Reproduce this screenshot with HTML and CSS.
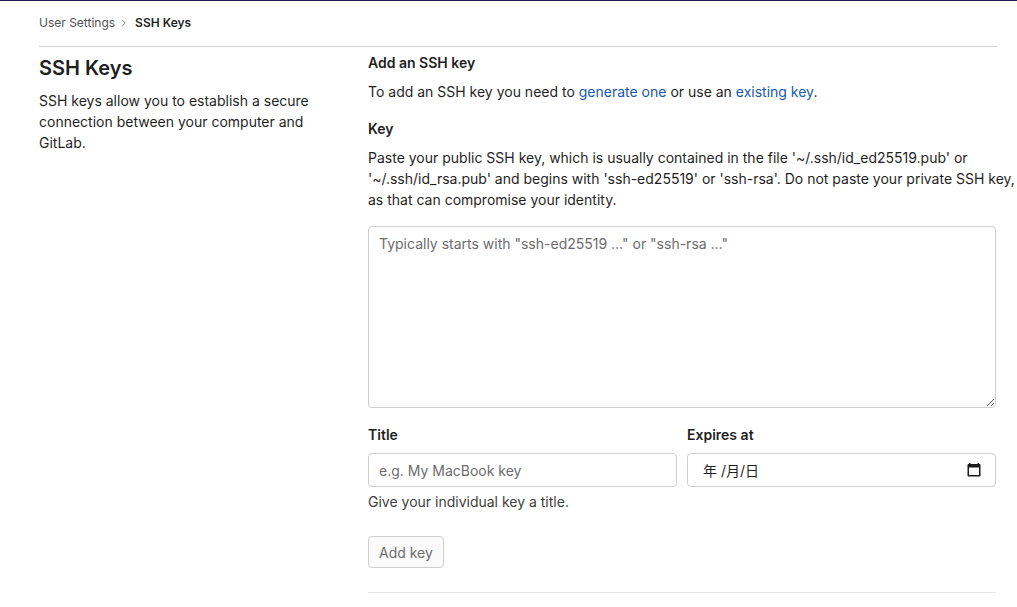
FILE: index.html
```html
<!DOCTYPE html>
<html lang="en">
<head>
<meta charset="utf-8">
<meta name="viewport" content="width=device-width, initial-scale=1">
<title>SSH Keys · User Settings · GitLab</title>
<link rel="stylesheet" href="styles.css">
</head>
<body>
<div class="page">
  <nav class="breadcrumbs" aria-label="Breadcrumbs">
    <a class="breadcrumb-link" href="#settings">User Settings</a>
    <svg class="breadcrumb-chevron" viewBox="0 0 8 8" aria-hidden="true"><path d="M2.5 1.2 5.2 4 2.5 6.8"/></svg>
    <a class="breadcrumb-current" href="#ssh" aria-current="page">SSH Keys</a>
  </nav>
  <main class="settings">
    <section class="intro">
      <h1 class="intro-title">SSH Keys</h1>
      <p class="text">SSH keys allow you to establish a secure connection between your computer and GitLab.</p>
    </section>
    <section class="content">
      <h2 class="heading">Add an SSH key</h2>
      <p class="text lead">To add an SSH key you need to <a class="link" href="#generate">generate one</a> or use an <a class="link" href="#existing">existing key</a>.</p>
      <form class="key-form">
        <label class="heading" for="key">Key</label>
        <p class="text key-help" id="key-help">Paste your public SSH key, which is usually contained in the file '~/.ssh/id_ed25519.pub' or '~/.ssh/id_rsa.pub' and begins with 'ssh-ed25519' or 'ssh-rsa'. Do not paste your private SSH key, as that can compromise your identity.</p>
        <textarea class="control key-input" id="key" aria-describedby="key-help" placeholder="Typically starts with &quot;ssh-ed25519 …&quot; or &quot;ssh-rsa …&quot;"></textarea>
        <div class="fields">
          <div class="field">
            <label class="heading" for="title">Title</label>
            <input class="control" id="title" type="text" placeholder="e.g. My MacBook key" aria-describedby="title-help">
            <p class="text help" id="title-help">Give your individual key a title.</p>
          </div>
          <div class="field">
            <label class="heading" for="expires">Expires at</label>
            <div class="control date">
              <input class="date-input" id="expires" type="text" placeholder="年 /月/日">
              <button class="date-button" type="button" aria-label="Choose a date">
                <svg class="date-icon" viewBox="0 0 16 16" aria-hidden="true"><path fill-rule="evenodd" d="M3 1h1.500v1h7V1H13v1h.500q1 0 1 1v10.500q0 1-1 1h-11q-1 0-1-1V3q0-1 1-1H3zM3 5.500v7.500h10V5.500z"/></svg>
              </button>
            </div>
          </div>
        </div>
        <button class="submit" type="submit" disabled>Add key</button>
      </form>
      <hr class="divider">
    </section>
  </main>
</div>
</body>
</html>
```
FILE: styles.css
```css
* { box-sizing: border-box; }
body {
  margin: 0;
  border-top: 1px solid #1f1a4d;
  background: #fff;
  color: #1f1f1f;
  font-family: Inter, "Noto Sans CJK SC", sans-serif;
  font-size: 14px;
  line-height: 21px;
}
h1, h2, p { margin: 0; }
input, textarea, button { font: inherit; }
.page { padding: 0 20px 0 39px; }
.breadcrumbs {
  display: flex;
  align-items: center;
  height: 46px;
  padding-bottom: 2px;
  border-bottom: 1px solid #d0d0d0;
  font-size: 12px;
}
.breadcrumb-link { color: #525252; text-decoration: none; }
.breadcrumb-chevron {
  width: 8px;
  height: 8px;
  margin: 0 7px 0 5px;
  fill: none;
  stroke: #777;
  stroke-width: 1;
}
.breadcrumb-current { color: #1f1f1f; font-weight: 600; text-decoration: none; }
.settings {
  display: grid;
  grid-template-columns: minmax(0, 1fr) minmax(0, 2fr);
  gap: 15px;
  padding: 5px 1px 14px 0;
}
.intro { padding-right: 40px; }
.intro-title {
  margin: 3px 0 9px;
  font-size: 20px;
  line-height: 26px;
  font-weight: 600;
}
.heading {
  display: block;
  font-size: 14px;
  line-height: 21px;
  font-weight: 600;
}
.lead { margin: 8px 0 16px; }
.link { color: #1858b0; text-decoration: none; }
.key-help { margin: 8px -20px 16px 0; }
.control {
  display: block;
  width: 100%;
  height: 34px;
  padding: 6px 10px;
  border: 1px solid #cfcfcf;
  border-radius: 4px;
  background: #fff;
  color: #303030;
}
.control::placeholder { color: #6c6c6c; opacity: 1; }
.key-input { height: 182px; resize: vertical; }
.fields {
  display: grid;
  grid-template-columns: repeat(2, minmax(0, 1fr));
  gap: 10px;
  margin: 16px 0 24px;
}
.field .control { margin-top: 8px; }
.help { margin-top: 4px; color: #404040; }
.date { display: flex; align-items: center; padding: 0 13px 0 15px; }
.date-input {
  flex: 1;
  min-width: 0;
  padding: 0;
  border: 0;
  background: none;
  outline: 0;
}
.date-input::placeholder { color: #1f1f1f; opacity: 1; }
.date-button { display: flex; padding: 0; border: 0; background: none; }
.date-icon { width: 16px; height: 16px; fill: #1a1a1a; }
.submit {
  display: block;
  height: 32px;
  padding: 0 10px;
  border: 1px solid #d0d0d0;
  border-radius: 4px;
  background: #fafafa;
  color: #6c6c6c;
}
.divider { margin: 24px 0 0; border: 0; border-top: 1px solid #e6e6e6; }
```
